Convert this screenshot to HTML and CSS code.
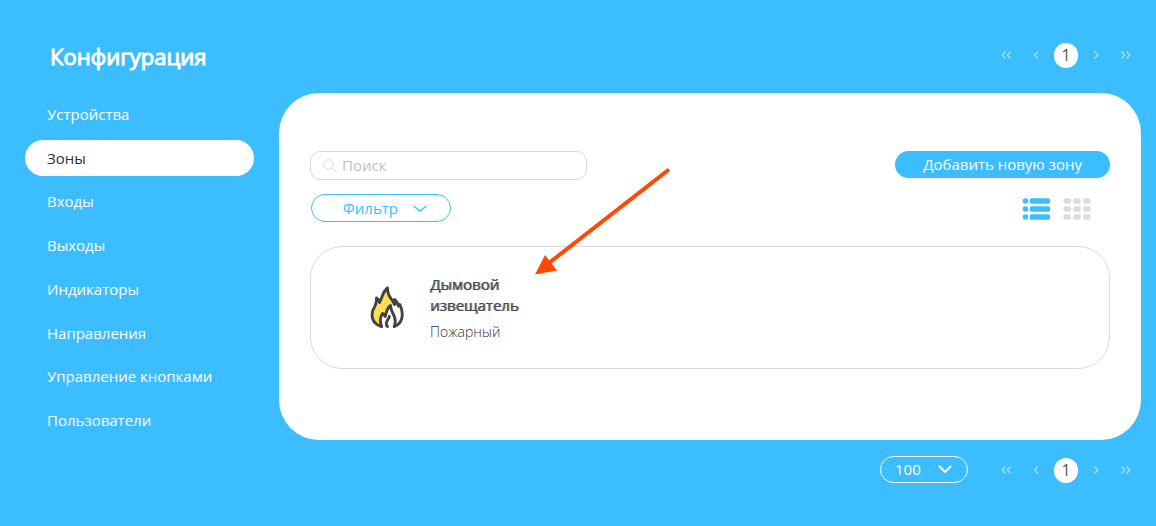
FILE: index.html
```html
<!DOCTYPE html>
<html lang="ru">
<head>
<meta charset="utf-8">
<meta name="viewport" content="width=device-width, initial-scale=1">
<title>Конфигурация</title>
<link rel="stylesheet" href="styles.css">
</head>
<body>
<div class="layout">
  <h1 class="title">Конфигурация</h1>
  <div class="bar bar-top">
    <nav class="pager" aria-label="Страницы, сверху">
      <button class="pager-item" type="button" aria-label="Первая"><svg class="arrow" viewBox="0 0 12 10"><path d="M5.500 1.500 2.300 5 5.500 8.500M10.500 1.500 7.300 5 10.500 8.500"/></svg></button>
      <button class="pager-item" type="button" aria-label="Назад"><svg class="arrow" viewBox="0 0 12 10"><path d="M8 1.500 4.600 5 8 8.500"/></svg></button>
      <button class="pager-item pager-current" type="button" aria-current="page"><span class="pager-number">1</span></button>
      <button class="pager-item" type="button" aria-label="Вперёд"><svg class="arrow" viewBox="0 0 12 10"><path d="M4.500 1.500 7.900 5 4.500 8.500"/></svg></button>
      <button class="pager-item" type="button" aria-label="Последняя"><svg class="arrow" viewBox="0 0 12 10"><path d="M1.500 1.500 4.700 5 1.500 8.500M6.500 1.500 9.700 5 6.500 8.500"/></svg></button>
    </nav>
  </div>

  <nav class="menu" aria-label="Разделы">
    <a class="menu-link" href="#devices">Устройства</a>
    <a class="menu-link menu-active" href="#zones" aria-current="page">Зоны</a>
    <a class="menu-link" href="#inputs">Входы</a>
    <a class="menu-link" href="#outputs">Выходы</a>
    <a class="menu-link" href="#indicators">Индикаторы</a>
    <a class="menu-link" href="#directions">Направления</a>
    <a class="menu-link" href="#buttons">Управление кнопками</a>
    <a class="menu-link" href="#users">Пользователи</a>
  </nav>

  <main class="panel">
    <div class="row">
      <label class="search">
        <svg class="search-icon" viewBox="0 0 14 14"><circle cx="5.500" cy="5.500" r="4.800"/><path d="m9 9 4.500 4.500"/></svg>
        <input class="search-input" type="search" placeholder="Поиск" aria-label="Поиск">
      </label>
      <button class="add" type="button">Добавить новую зону</button>
    </div>
    <div class="row row-filter">
      <button class="filter" type="button">Фильтр<svg class="chevron" viewBox="0 0 14 8"><path d="m.6 2 6.400 5 6.400-5"/></svg></button>
      <div class="views">
        <button class="view" type="button" aria-label="Списком">
          <svg class="view-icon view-on" viewBox="0 0 28 22"><circle cx="3.500" cy="3" r="2.800"/><circle cx="3.500" cy="11" r="2.800"/><circle cx="3.500" cy="19" r="2.800"/><rect x="7.800" y=".2" width="20.200" height="5.600" rx="1.500"/><rect x="7.800" y="8.200" width="20.200" height="5.600" rx="1.500"/><rect x="7.800" y="16.200" width="20.200" height="5.600" rx="1.500"/></svg>
        </button>
        <button class="view" type="button" aria-label="Плиткой">
          <svg class="view-icon" viewBox="0 0 28 22"><g id="tiles"><rect x=".5" y=".2" width="7.400" height="5.600" rx="1.800"/><rect x="10.300" y=".2" width="7.400" height="5.600" rx="1.800"/><rect x="20.100" y=".2" width="7.400" height="5.600" rx="1.800"/></g><use href="#tiles" y="8"/><use href="#tiles" y="16"/></svg>
        </button>
      </div>
    </div>
    <article class="card">
      <svg class="fire" viewBox="0 0 34 43">
        <path class="flame" d="M11.500 40.500C5 38.500 2 34 2 29c0-4 1-6 3-9 1.300-2.500 1.600-5 1.500-8 1.500 1 2.500 2.500 3 4.500C12.500 11 12.500 6 17.500 2c0 5 1.500 8 3.500 10.500 1.500 2 2 4 1.500 6.500-3 2-5 5.500-6.500 11-1-1-2-2-3.500-2.500C10.500 31 9.500 35 11.500 40.500Z"/>
        <path class="stroke" d="M11.500 40.500C5 38.500 2 34 2 29c0-4 1-6 3-9 1.300-2.500 1.600-5 1.500-8 1.500 1 2.500 2.500 3 4.500C12.500 11 12.500 6 17.500 2c0 5 1.500 8 3.500 10.500 1.500 2 2.500 4 3.500 6 .8-1.500.8-3.500.3-5 2.300 2 3.200 4 3.500 6.500.8-.3 1.200-.8 1.500-1.500 1.800 3.500 2.500 6.500 2.500 10 0 6-2.500 10-8 12"/>
        <path class="stroke" d="M11.500 40.500c-2-5-1.500-9 1-13 1.300.4 2 1.500 2.700 3 1-5 2.500-9 5.300-11 .3 5.500 2.800 8 4 11.500 1 3 1 6.500-.2 9.500"/>
        <path class="stroke" d="M19.300 30.500c-.3 2.500-3 4-3 7 0 1.200.5 2.200 1.200 3"/>
      </svg>
      <div class="card-text">
        <h2 class="card-title">Дымовой извещатель</h2>
        <p class="card-kind">Пожарный</p>
      </div>
    </article>
    <svg class="pointer" viewBox="0 0 136 108" aria-hidden="true"><path class="pointer-line" d="M134 1.500 14 95"/><path class="pointer-head" d="M0 106.500 10 87 22 102.500Z"/></svg>
  </main>

  <div class="bar bar-bottom">
    <div class="size">
      <select class="size-select" aria-label="Записей на странице"><option>100</option></select>
      <svg class="chevron size-chevron" viewBox="0 0 14 8"><path d="m1 1 6 6 6-6"/></svg>
    </div>
    <nav class="pager" aria-label="Страницы, снизу">
      <button class="pager-item" type="button" aria-label="Первая"><svg class="arrow" viewBox="0 0 12 10"><path d="M5.500 1.500 2.300 5 5.500 8.500M10.500 1.500 7.300 5 10.500 8.500"/></svg></button>
      <button class="pager-item" type="button" aria-label="Назад"><svg class="arrow" viewBox="0 0 12 10"><path d="M8 1.500 4.600 5 8 8.500"/></svg></button>
      <button class="pager-item pager-current" type="button" aria-current="page"><span class="pager-number">1</span></button>
      <button class="pager-item" type="button" aria-label="Вперёд"><svg class="arrow" viewBox="0 0 12 10"><path d="M4.500 1.500 7.900 5 4.500 8.500"/></svg></button>
      <button class="pager-item" type="button" aria-label="Последняя"><svg class="arrow" viewBox="0 0 12 10"><path d="M1.500 1.500 4.700 5 1.500 8.500M6.500 1.500 9.700 5 6.500 8.500"/></svg></button>
    </nav>
  </div>
</div>
</body>
</html>
```
FILE: styles.css
```css
* { box-sizing: border-box; }
body {
  margin: 0;
  background: #3bbdff;
  color: #2d3338;
  font: 15px/20px "Open Sans", "Noto Sans", sans-serif;
}
button, input, select { font: inherit; color: inherit; }
button { border: 0; padding: 0; background: none; cursor: pointer; }
svg { display: block; flex: none; fill: none; }

.layout {
  display: grid;
  grid-template-columns: 229px minmax(0, 1fr);
  column-gap: 25px;
  padding: 40px 15px 40px 25px;
}
.title {
  margin: 0;
  padding: 0 0 21px 25px;
  color: #fff;
  font-size: 22px;
  line-height: 32px;
  font-weight: 400;
  -webkit-text-stroke: 1px #fff;
}
.bar { display: flex; justify-content: flex-end; align-items: flex-start; }
.bar-bottom { grid-column: 2; gap: 23px; padding-top: 16px; }

.pager { display: flex; }
.pager-item {
  width: 30px;
  height: 30px;
  display: flex;
  align-items: center;
  justify-content: center;
}
.bar-bottom .pager-item { height: 28px; }
.pager-number {
  width: 24px;
  height: 25px;
  border-radius: 12px;
  background: #fff;
  color: #555;
  font-size: 16px;
  line-height: 25px;
}
.arrow { width: 12px; height: 10px; stroke: #a9e0ff; stroke-width: 1.3; }

.menu {
  display: flex;
  flex-direction: column;
  justify-content: space-between;
  padding: 3px 0 2px;
}
.menu-link {
  padding: 8px 22px;
  border-radius: 18px;
  color: #fff;
  font-weight: 500;
  text-decoration: none;
}
.menu-active { background: #fff; color: #2d3338; font-weight: 400; }

.panel {
  position: relative;
  padding: 58px 31px 71px;
  border-radius: 40px;
  background: #fff;
}
.row {
  display: flex;
  justify-content: space-between;
  align-items: flex-start;
}
.search {
  display: flex;
  align-items: center;
  gap: 5px;
  width: 277px;
  height: 29px;
  padding: 0 12px;
  border: 1px solid #d9d9d9;
  border-radius: 10px;
}
.search-icon { width: 14px; height: 14px; stroke: #d9d9d9; }
.search-input {
  flex: 1;
  min-width: 0;
  padding: 0 0 2px;
  border: 0;
  outline: 0;
  background: none;
}
.search-input::placeholder { color: #bfbfbf; opacity: 1; }
.add {
  height: 27px;
  padding: 0 28px 2px;
  border-radius: 14px;
  background: #3bbdff;
  color: #fff;
}
.row-filter { align-items: center; padding: 14px 19px 24px 1px; }
.filter {
  display: flex;
  align-items: center;
  justify-content: flex-end;
  gap: 15px;
  width: 140px;
  height: 28px;
  padding: 0 23px;
  border: 1px solid #3bbdff;
  border-radius: 14px;
  color: #3bbdff;
}
.chevron { width: 14px; height: 8px; stroke: currentColor; stroke-width: 1.4; }
.views { display: flex; gap: 13px; padding-top: 2px; }
.view-icon { width: 28px; height: 22px; fill: #dcdcdc; }
.view-on { fill: #3bbdff; }

.card {
  display: flex;
  align-items: center;
  gap: 26px;
  min-height: 123px;
  padding: 0 59px;
  border: 1px solid #d9d9d9;
  border-radius: 32px;
}
.fire { width: 34px; height: 43px; }
.flame { fill: #ffdc55; }
.stroke {
  stroke: #424242;
  stroke-width: 2.9;
  stroke-linecap: round;
  stroke-linejoin: round;
}
.card-text { width: 120px; }
.card-title {
  margin: 0;
  color: #454b52;
  font-size: 15px;
  line-height: 21px;
  font-weight: 400;
  text-shadow: 1px 0 0 #7c8186;
}
.card-kind { margin: 6px 0 0; font-size: 14px; font-weight: 300; }
.pointer {
  position: absolute;
  left: 256px;
  top: 75px;
  width: 136px;
  height: 108px;
  pointer-events: none;
}
.pointer-line { stroke: #ff4800; stroke-width: 4; }
.pointer-head { fill: #ff4800; }

.size { position: relative; color: #fff; }
.size-select {
  display: block;
  appearance: none;
  width: 88px;
  height: 27px;
  padding: 0 14px 2px;
  border: 1px solid #fff;
  border-radius: 14px;
  background: none;
  font-weight: 500;
}
.size-select option { color: #2d3338; }
.size-chevron {
  position: absolute;
  right: 16px;
  top: 9px;
  stroke-width: 1.8;
  pointer-events: none;
}
```
